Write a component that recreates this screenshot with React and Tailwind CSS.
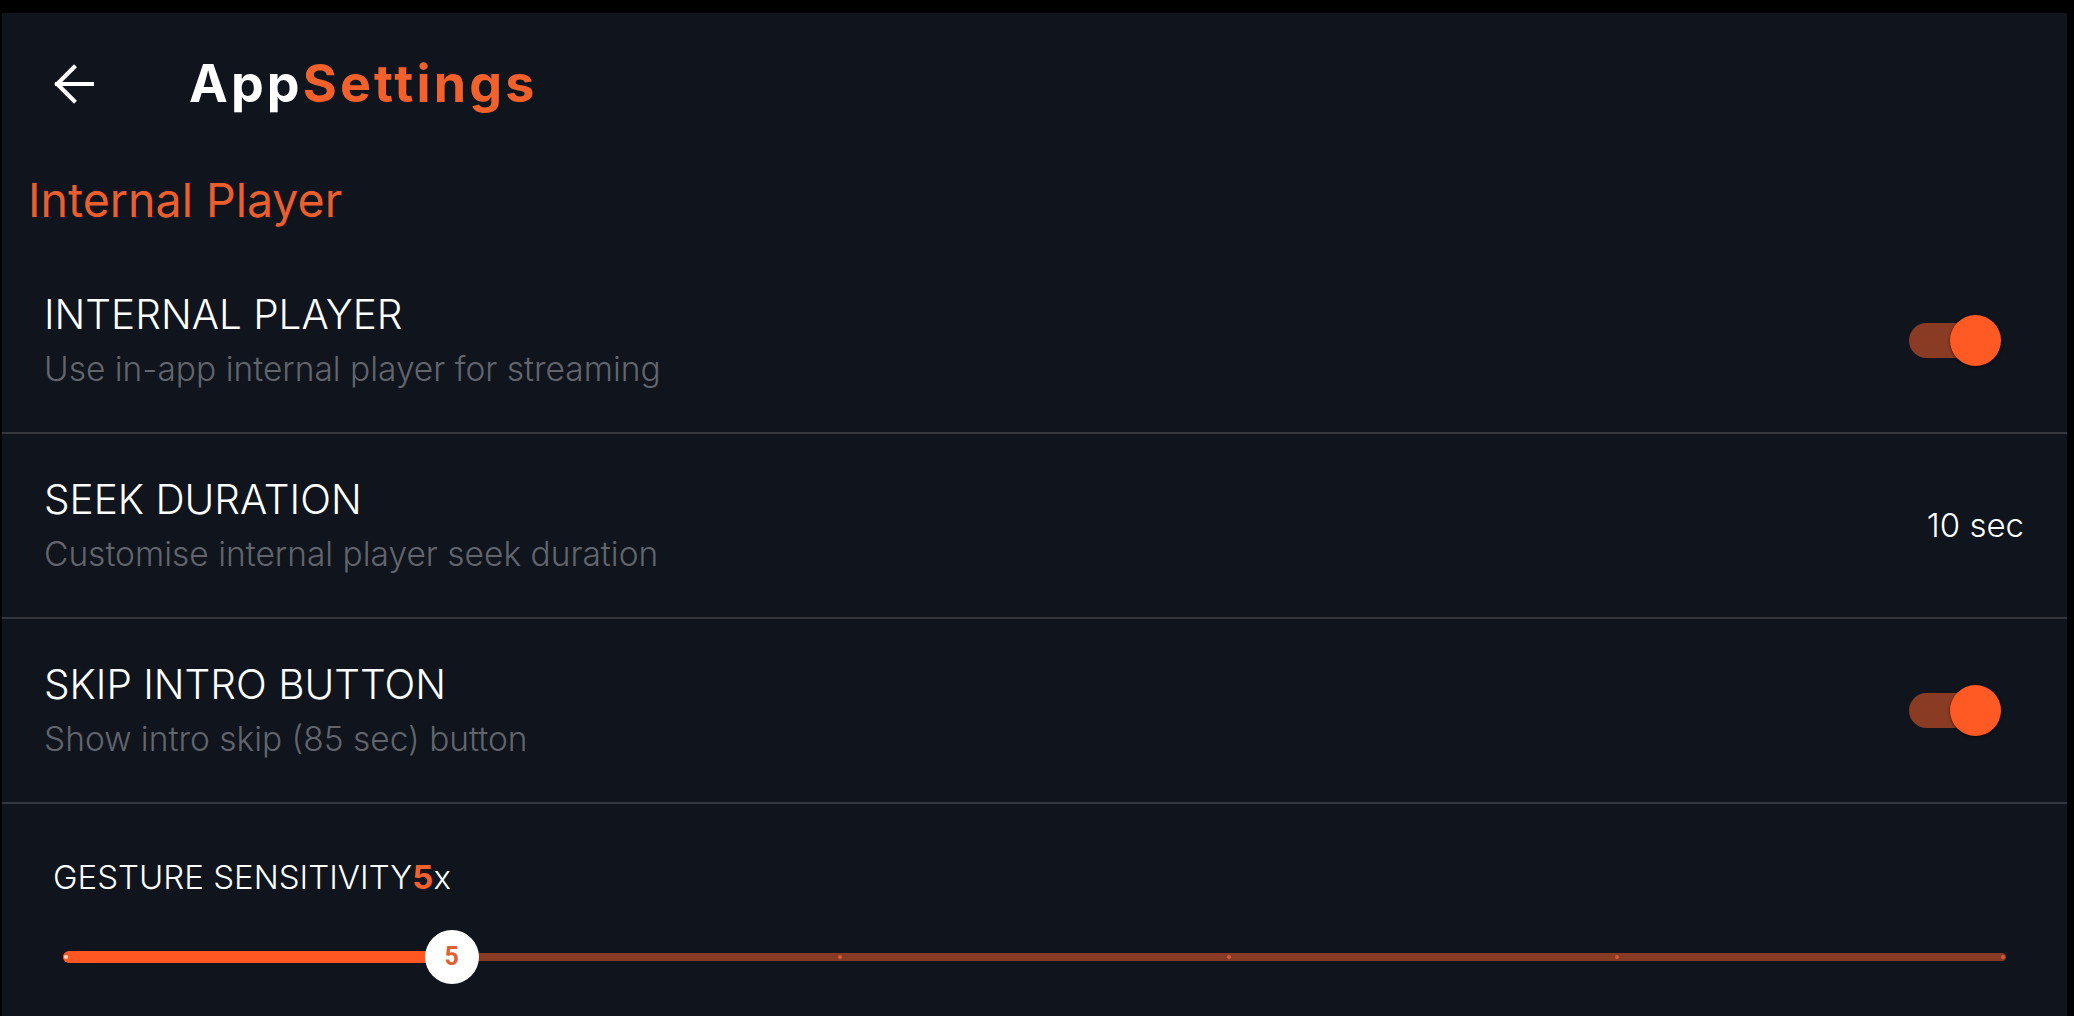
import { useState } from 'react';

function Toggle({ on }) {
  return (
    <div className="relative h-[51px] w-[92px] shrink-0">
      <div className={`absolute left-0 top-[8px] h-[35px] w-[80px] rounded-full ${on ? 'bg-[#8a3b23]' : 'bg-[#3a3d44]'}`} />
      <div className={`absolute top-0 h-[51px] w-[51px] rounded-full shadow-[0_1px_3px_rgba(0,0,0,0.6)] ${on ? 'right-0 bg-[#ff5a24]' : 'left-0 bg-[#9a9ca3]'}`} />
    </div>
  );
}

function SettingRow({ title, subtitle, right }) {
  return (
    <div className="flex h-[185px] items-center justify-between border-b-2 border-[#34373e] pl-[42px] pr-[66px]">
      <div className="flex flex-col">
        <p className="text-[40.5px] font-light leading-[52px] text-white">{title}</p>
        <p className="mt-[5px] text-[33.5px] font-light leading-[46px] text-[#62656c]">{subtitle}</p>
      </div>
      {right}
    </div>
  );
}

function GestureSlider({ value, max }) {
  const pct = (value / max) * 100;
  const ticks = [0, 0.2, 0.4, 0.6, 0.8, 1];
  return (
    <div className="relative mx-[61px] h-[54px]">
      <div className="absolute left-0 right-0 top-[23px] h-[8px] rounded-full bg-[#873a24]" />
      <div className="absolute left-0 top-[21px] h-[12px] rounded-full bg-[#ff5722]" style={{ width: pct + '%' }} />
      {ticks.map(t => (
        <div
          key={t}
          className={`absolute top-[25px] h-[4px] w-[4px] -translate-x-1/2 rounded-full ${t * 100 <= pct ? 'bg-[#ffd9cc]' : 'bg-[#d45a3c]'}`}
          style={{ left: `calc(${t * 100}% + ${t === 0 ? 3 : t === 1 ? -3 : 0}px)` }}
        />
      ))}
      <div
        className="absolute top-0 flex h-[54px] w-[54px] -translate-x-1/2 items-center justify-center rounded-full bg-white font-['Roboto',sans-serif] text-[25px] font-bold text-[#e0602f]"
        style={{ left: pct + '%' }}
      >
        {value}
      </div>
    </div>
  );
}

export default function App() {
  const [internalPlayer] = useState(true);
  const [skipIntro] = useState(true);

  return (
    <div className="h-[1016px] w-[2074px] overflow-hidden bg-black pt-[13px] font-['Inter',sans-serif]">
      <div className="ml-[2px] flex h-[1003px] w-[2065px] flex-col bg-[#10141c]">
        {/* header */}
        <div className="flex h-[142px] shrink-0 items-center">
          <button className="ml-[51px] flex h-[42px] w-[42px] items-center justify-center text-white">
            <svg width="42" height="42" viewBox="0 0 40 40" fill="none" stroke="currentColor" strokeWidth="4" strokeLinecap="square">
              <path d="M4 20H37" />
              <path d="M20 4L4 20l16 16" />
            </svg>
          </button>
          <h1 className="ml-[94px] text-[52px] font-bold tracking-[0.06em] text-white">
            App<span className="text-[#f2602c]">Settings</span>
          </h1>
        </div>

        <h2 className="ml-[26px] mt-[17px] text-[46.5px] font-normal leading-[56px] text-[#eb5e2d]">Internal Player</h2>

        <div className="mt-[21px] flex flex-col">
          <SettingRow
            title="INTERNAL PLAYER"
            subtitle="Use in-app internal player for streaming"
            right={<Toggle on={internalPlayer} />}
          />
          <SettingRow
            title="SEEK DURATION"
            subtitle="Customise internal player seek duration"
            right={<span className="-mr-[23px] text-[33px] font-light text-white">10 sec</span>}
          />
          <SettingRow
            title="SKIP INTRO BUTTON"
            subtitle="Show intro skip (85 sec) button"
            right={<Toggle on={skipIntro} />}
          />
        </div>

        <div className="flex flex-col pt-[50px]">
          <p className="ml-[51px] text-[33px] font-light leading-[46px] text-white">
            GESTURE SENSITIVITY<span className="font-bold text-[#f2602c]">5</span>x
          </p>
          <div className="mt-[30px]">
            <GestureSlider value={5} max={25} />
          </div>
        </div>
      </div>
    </div>
  );
}
